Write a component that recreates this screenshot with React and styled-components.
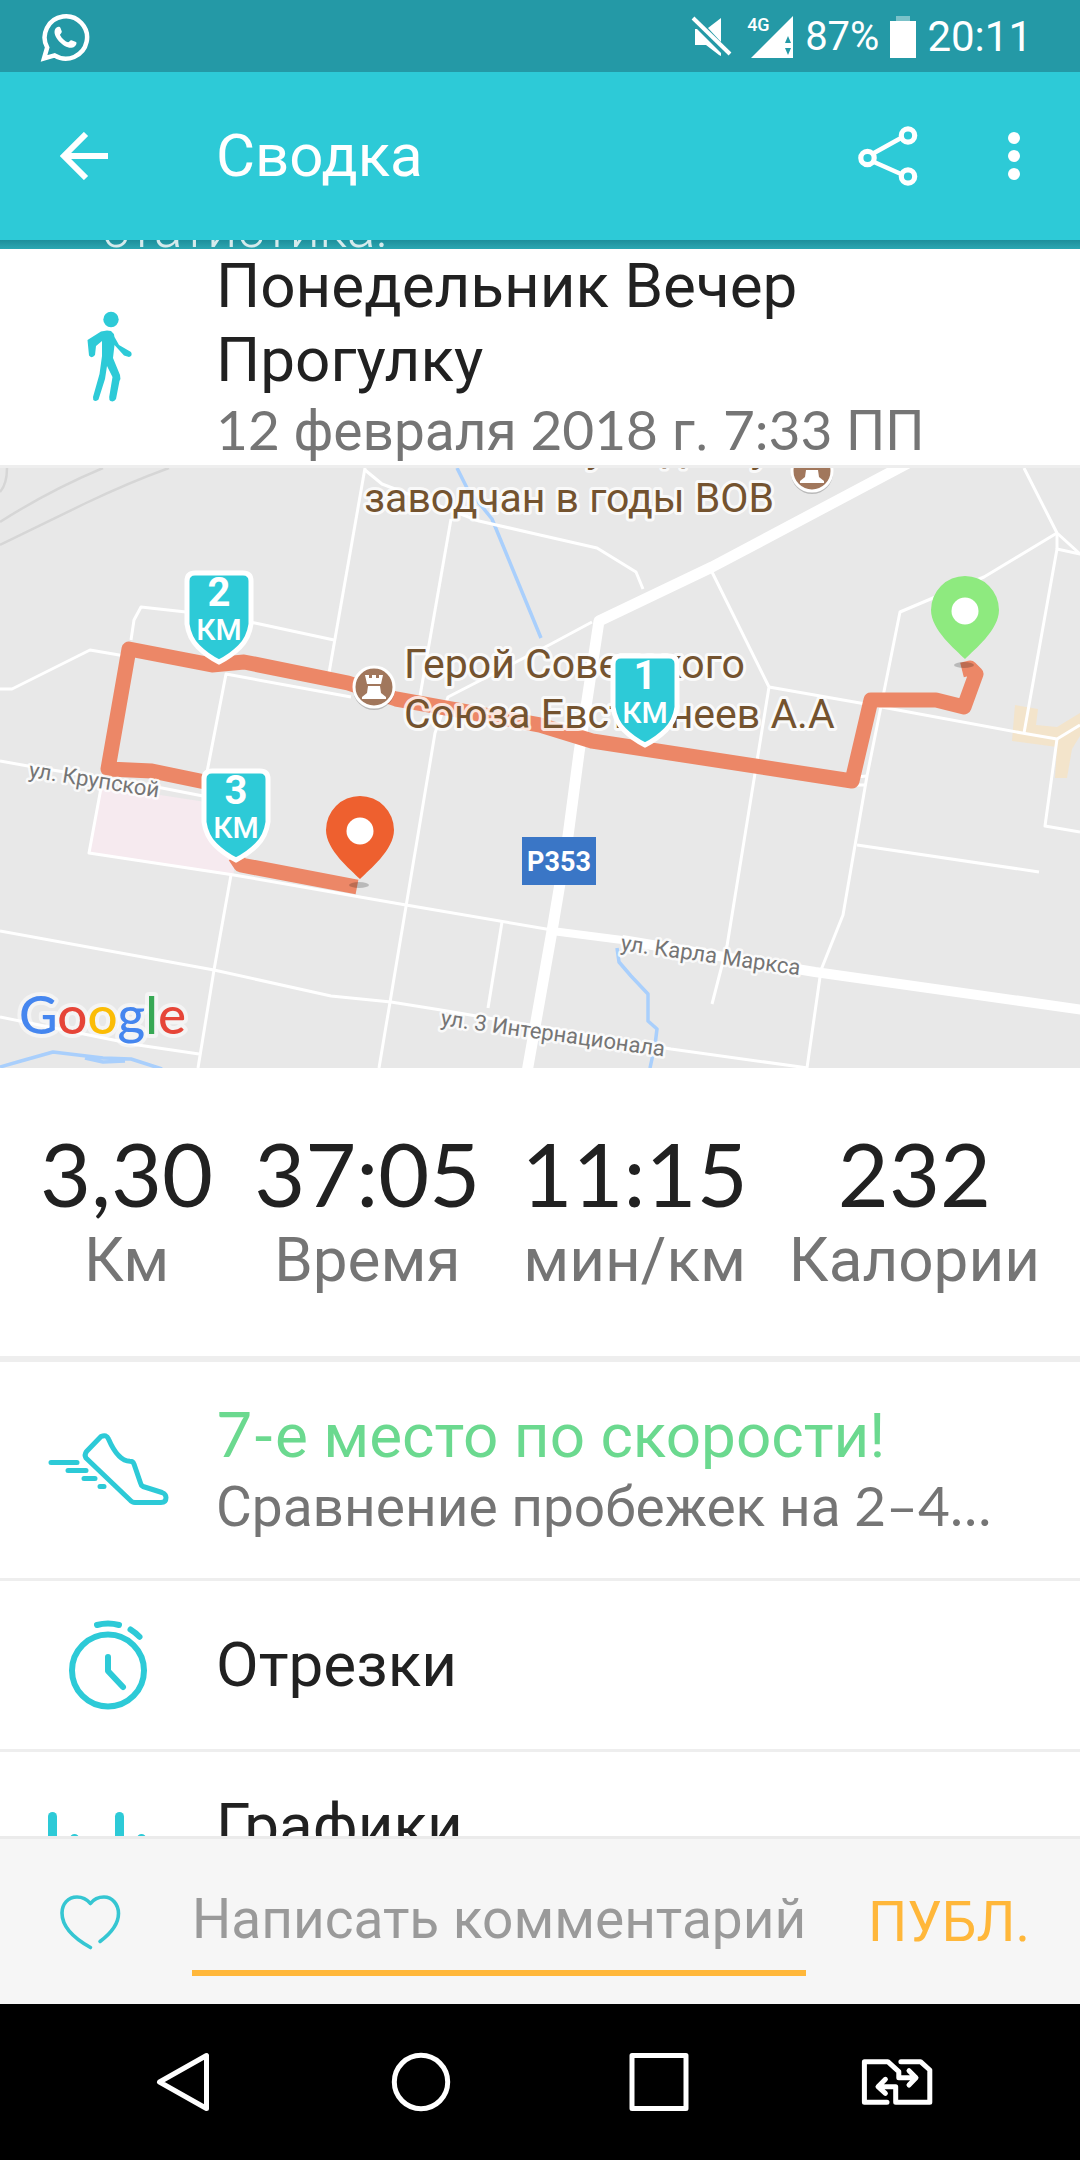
import React, { useState } from 'react'
import styled, { createGlobalStyle } from 'styled-components'

const GlobalStyle = createGlobalStyle`
* {
  box-sizing: border-box;
}
body {
  margin: 0;
  background: #ffffff;
  font-family: Roboto, 'Noto Sans', sans-serif;
}
button, input {
  border: 0;
  padding: 0;
  background: none;
  font: inherit;
}
h1, h2, p {
  margin: 0;
  font-weight: 400;
}
`

const Screen = styled.div`
display: flex;
flex-direction: column;
height: 100vh;
color: #212121;
`

const StatusBar = styled.div`
display: flex;
align-items: center;
justify-content: space-between;
flex: none;
height: 72px;
padding: 2px 48px 0 40px;
background: #2499a6;
color: #ffffff;
`

const StatusGroup = styled.div`
display: flex;
align-items: center;
gap: 11px;
font-size: ${props => props.size}px;
line-height: 48px;
`

const Network = styled.span`
display: flex;
position: relative;
margin-left: 6px;
`

const NetworkType = styled.span`
position: absolute;
top: 0;
left: -4px;
font-size: 18px;
line-height: 18px;
font-weight: 500;
`

const AppBar = styled.header`
display: flex;
align-items: center;
flex: none;
height: 168px;
background: #2dcad7;
color: #ffffff;
`

const BarButton = styled.button`
display: flex;
align-items: center;
justify-content: center;
flex: none;
width: ${props => props.width}px;
height: 100%;
color: inherit;
`

const BarTitle = styled.h1`
flex: 1;
padding-left: 48px;
font-size: 60px;
line-height: 72px;
`

const Feed = styled.main`
flex: 1;
min-height: 0;
overflow: hidden;
`

const Promo = styled.div`
display: flex;
align-items: flex-end;
height: 9px;
padding-left: 102px;
overflow: hidden;
background: linear-gradient(#1d8f9b, #2ba7b2);
color: #d5eaec;
font-size: 53px;
font-weight: 300;
line-height: 40px;
`

const Row = styled.section`
display: flex;
align-items: center;
height: ${props => props.height}px;
border-bottom: 3px solid #eeeeee;
`

const RowIcon = styled.div`
display: flex;
justify-content: center;
flex: none;
width: 216px;
color: #2dcad7;
`

const RowText = styled.div`
flex: 1;
min-width: 0;
min-height: ${props => props.lines * 71}px;
padding-right: 72px;
`

const RowTitle = styled.h2`
color: ${props => props.color || '#212121'};
font-size: 62px;
line-height: 74px;
`

const RowSub = styled.p`
color: #757575;
font-size: 55px;
line-height: 68px;
white-space: nowrap;
`

const Num = styled.span`
font-family: Lato, sans-serif;
font-variant-numeric: tabular-nums;
line-height: 1;
`

const MapBox = styled.div`
svg {
  display: block;
  width: 100%;
  height: auto;
}
`

const Stats = styled.section`
display: flex;
justify-content: space-between;
padding: 56px 40px 60px;
border-bottom: 6px solid #eeeeee;
`

const Stat = styled.div`
display: flex;
flex-direction: column;
align-items: center;
gap: 2px;
`

const StatValue = styled(Num)`
font-size: 88px;
line-height: 98px;
`

const StatLabel = styled.span`
color: #757575;
font-size: 62px;
line-height: 72px;
`

const CommentBar = styled.form`
display: flex;
flex: none;
height: 168px;
border-top: 3px solid #ebebeb;
background: #f6f6f6;
`

const LikeButton = styled.button`
display: flex;
align-items: center;
justify-content: center;
flex: none;
width: 180px;
color: #35c6d2;
`

const CommentInput = styled.input`
flex: 1;
min-width: 0;
margin: 28px 0 28px 12px;
border-bottom: 6px solid #ffb73a;
border-radius: 0;
outline: none;
color: #212121;
font-size: 55px;
&::placeholder {
  color: #9a9a9a;
  opacity: 1;
}
`

const PostButton = styled.button`
flex: none;
padding: 0 50px 0 62px;
color: #ffb73a;
font-size: 55px;
`

const NavBar = styled.nav`
display: flex;
flex: none;
height: 156px;
padding: 0 64px;
background: #000000;
color: #ffffff;
`

const NavButton = styled.button`
display: flex;
align-items: center;
justify-content: center;
flex: 1;
color: inherit;
`

function WhatsAppIcon () {
  return (
    <svg width='50' height='50' viewBox='0 0 50 50'>
      <path d='M4 46.5 L7.2 35.5 A21.2 21.2 0 1 1 14.6 43.4 Z' fill='none' stroke='currentColor' strokeWidth='4.5' />
      <path d='M15 17.5 C16.6 13.8 20 14.2 20.5 16 L21.8 19.5 C22 21 20 22 20 23 C22 27 25.5 29.5 28 30.3 C29.5 30 30 27.8 31.5 28.2 L36 30 C37.5 31 35.5 35.5 31.5 35.8 C24 36.5 12 24.5 15 17.5 Z' fill='currentColor' />
    </svg>
  )
}

function MuteIcon () {
  return (
    <svg width='44' height='46' viewBox='0 0 44 46' fill='currentColor'>
      <path d='M5 15 H7 L31 39 V42 L29 41 L16 31 H5 Z' />
      <path d='M18 14 L31 4 V28 Z' />
      <path d='M3 4 L40 40' stroke='currentColor' strokeWidth='4' />
    </svg>
  )
}

function SignalIcon () {
  return (
    <svg width='43' height='43' viewBox='0 0 43 43'>
      <path d='M42 0 V42 H0 Z' fill='currentColor' />
      <path d='M34 27 L37 20 L40 27 Z M34 32 L37 39 L40 32 Z' fill='#2499a6' />
    </svg>
  )
}

function BatteryIcon () {
  return (
    <svg width='26' height='42' viewBox='0 0 26 42' fill='currentColor'>
      <rect x='6' y='0' width='14' height='5' opacity='0.4' />
      <rect x='0' y='5' width='26' height='37' />
    </svg>
  )
}

function BackIcon () {
  return (
    <svg width='48' height='48' viewBox='0 0 48 48' fill='none' stroke='currentColor' strokeWidth='6'>
      <path d='M48 24 H5 M26 2 L4 24 L26 46' />
    </svg>
  )
}

function ShareIcon () {
  return (
    <svg width='60' height='62' viewBox='0 0 60 62' fill='none' stroke='currentColor' strokeWidth='5.2'>
      <path d='M16 28 L43 13 M16 37 L43 49' strokeWidth='4.6' />
      <circle cx='9.5' cy='33' r='6.7' />
      <circle cx='50' cy='10.5' r='6.7' />
      <circle cx='50' cy='51.5' r='6.7' />
    </svg>
  )
}

function MoreIcon () {
  return (
    <svg width='12' height='48' viewBox='0 0 12 48' fill='currentColor'>
      <circle cx='6' cy='6' r='6' />
      <circle cx='6' cy='24' r='6' />
      <circle cx='6' cy='42' r='6' />
    </svg>
  )
}

function WalkIcon () {
  return (
    <svg width='54' height='92' viewBox='-4 0 54 92' fill='currentColor'>
      <circle cx='26' cy='8.5' r='7.7' />
      <path d='M22 19.5 L26 20 Q29 22 29.5 26 L34 34 L46 41 Q48 45 44 46 L39 44.5 L29.5 34 L28 47 L35 64 Q36 68 34.5 70 L31 88 Q29 91.5 25.5 90 Q24 89 24.2 86 L27.5 66 L22 55 L20 68 L13.5 88.5 Q11 91 8.3 89 L8 86 L14.5 63 L17 45 V30 L11 35 L10 44 Q7 48 4 44.5 L2.5 29 L16 20.5 Z' />
    </svg>
  )
}

function ShoeIcon () {
  return (
    <svg width='124' height='76' viewBox='0 0 124 76' fill='none' stroke='currentColor' strokeWidth='5' strokeLinecap='round' strokeLinejoin='round'>
      <path d='M55 4.5 L40.5 19.5 Q38 23 40 26 L84 68 Q86 70.5 89 70.5 H115 Q120 70.5 120 65.5 Q120 62 116 60.5 L97 54.5 Q95 53.5 94.5 51 L88 32 Q87 29.3 84 29.3 Q72 29 62.5 7 Q60.5 2 55 4.5 Z' />
      <path d='M5 30.5 H31 M22 38.5 H40 M38 46.5 H49 M54 54.5 H58' />
    </svg>
  )
}

function StopwatchIcon () {
  return (
    <svg width='84' height='94' viewBox='0 0 84 94' fill='none' stroke='currentColor' strokeWidth='6' strokeLinecap='round' strokeLinejoin='round'>
      <circle cx='42' cy='52.5' r='36' />
      <path d='M42 39 V53 L57 69 M31 7 Q42 4 53 7 M64.5 11.5 Q70 15 73.5 18.7' />
    </svg>
  )
}

function ChartIcon () {
  return (
    <svg width='120' height='96' viewBox='0 0 120 96' fill='currentColor'>
      <rect x='0' y='0' width='9' height='96' rx='4.5' />
      <rect x='22' y='22' width='9' height='74' rx='4.5' />
      <rect x='67' y='0' width='9' height='96' rx='4.5' />
      <rect x='89' y='22' width='9' height='74' rx='4.5' />
    </svg>
  )
}

function HeartIcon ({ filled }) {
  return (
    <svg width='64' height='58' viewBox='0 0 64 58' fill={filled ? 'currentColor' : 'none'} stroke='currentColor' strokeWidth='3.6' strokeLinecap='round' strokeLinejoin='round'>
      <path d='M42 48.5 C52 41 60.5 31 60.5 20.5 C60.5 11 54 4 46 4 C40 4 35.5 6.5 32.5 10.5 C29 6.5 25 4 19 4 C10 4 4 11 4 20 C4 35 19 47 32.5 54.5' />
    </svg>
  )
}

const roads = [
  'M365 0 L329 205',
  'M365 2 L382 16 L479 53 L540 67 L597 80 L636 104 L643 121',
  'M451 51 L420 228',
  'M592 154 L551 176 L448 229 L435 265 L379 600',
  'M131 172 L134 152 L141 139 L186 144 L255 155 L334 172',
  'M0 221 L12 221 L90 182 L125 188',
  'M351 229 L226 206 L207 304',
  'M0 293 L28 298 L162 320 L203 328',
  'M101 320 L89 385 L234 407 L406 437 L552 462',
  'M231 407 L214 502 L198 600',
  'M0 463 L214 502 L331 528 L391 534 L441 542 L671 581 L808 600',
  'M0 549 L138 577 L199 586',
  'M502 454 L488 540',
  'M710 100 L769 219 L727 478 L712 536',
  'M769 219 L860 235 L1022 265 L1057 271 L1080 257',
  'M1057 271 L1045 358 L1080 364',
  'M1024 0 L1057 65 L1080 86 L1057 81 L1024 265',
  'M1057 65 L984 109 L933 130 L900 144 L867 308 L858 360 L843 447 L821 502 L807 600',
  'M1057 65 L1057 81',
  'M857 377 L1039 404',
  'M856 309 L867 308 M856 317 L865 317'
]

function Shield ({ x, y, value }) {
  return (
    <g transform={`translate(${x} ${y})`} textAnchor='middle' fill='#ffffff'>
      <path
        d='M-24 3 H24 Q32 3 32 11 V54 Q30 68 21 77 Q12 86 0 92 Q-12 86 -21 77 Q-30 68 -32 54 V11 Q-32 3 -24 3 Z'
        fill='#2dcad7' stroke='#ffffff' strokeWidth='5'
      />
      <text x='0' y='36' fontSize='40' fontWeight='700'>{value}</text>
      <text x='0' y='70' fontSize='30' fontWeight='500'>КМ</text>
    </g>
  )
}

function Pin ({ x, y, color }) {
  return (
    <g transform={`translate(${x} ${y})`}>
      <ellipse cx='-1' cy='6' rx='10' ry='3' fill='#000000' opacity='0.2' />
      <path d='M0 0 C-9 -9 -34 -29 -34 -49 A34 34 0 0 1 34 -49 C34 -29 9 -9 0 0 Z' fill={color} />
      <circle cx='0' cy='-48' r='13.5' fill='#ffffff' />
    </g>
  )
}

function Poi ({ x, y }) {
  return (
    <g transform={`translate(${x} ${y})`}>
      <circle cx='0' cy='2' r='21' fill='#000000' opacity='0.2' />
      <circle cx='0' cy='0' r='20' fill='#a1775c' stroke='#ffffff' strokeWidth='3' />
      <path d='M-9 -12 H-5 V-9 H-2 V-12 H2 V-9 H5 V-12 H9 L7 -3 H-7 Z M-6 -1 H6 L7 6 L12 10 V12 H-12 V10 L-7 6 Z' fill='#ffffff' />
    </g>
  )
}

function RouteMap () {
  return (
    <MapBox>
      <svg viewBox='0 0 1080 600' fontFamily='Roboto, sans-serif' role='img' aria-label='Карта'>
        <rect width='1080' height='600' fill='#e8e8e8' />
        <path d='M101 318 L245 340 L233 408 L90 384 Z' fill='#f6eaef' />
        <path d='M1015 237 L1038 241 L1036 257 L1057 259 L1080 245 V268 L1072 281 L1067 310 H1055 L1057 279 L1012 273 Z' fill='#f3e4cb' />
        <g fill='none' stroke='#d6d6d6' strokeWidth='2.5'>
          <path d='M0 54 Q50 22 103 0 M0 77 L86 35 Q130 14 169 0 M7 0 Q7 16 0 24' />
        </g>
        <g fill='none' stroke='#a9cffc' strokeWidth='3.5' strokeLinejoin='round'>
          <path d='M457 0 L467 20 L492 51 L541 170' />
          <path d='M617 480 L619 494 L631 508 L648 526 V553 L657 561 L655 577 L650 600' />
          <path d='M0 599 L21 593 L53 584 L103 590 L131 591 L162 601 M85 590 L103 594 L125 593' />
        </g>
        <g fill='none' stroke='#ffffff' strokeWidth='3' strokeLinejoin='round'>
          {roads.map(d => <path key={d} d={d} />)}
          <path d='M527 604 L552 463 L568 368 L579 285 L599 153 L712 99 L910 -6' strokeWidth='11' />
          <path d='M552 463 L622 472' strokeWidth='8' />
          <path d='M622 472 L815 504 L1084 542' strokeWidth='10' />
        </g>

        <path
          d='M962 202 L970 200 L976 206 L964 239 L936 232 H871 L852 313 L592 273 L540 257 L396 231 L348 215 L244 194 L212 197 L129 181 L108 301 L152 303 L205 314 M235 388 L241 397 L357 419'
          fill='none' stroke='#ec8767' strokeWidth='15' strokeLinejoin='round'
        />

        <g fill='#74532f' fontSize='41' stroke='#ffffff' strokeOpacity='0.8' strokeWidth='6' strokeLinejoin='round' paintOrder='stroke'>
          <text x='770' y='-6' textAnchor='end'>у подвигу</text>
          <text x='774' y='44' textAnchor='end'>заводчан в годы ВОВ</text>
          <text x='404' y='210'>Герой Советского</text>
          <text x='404' y='260'>Союза Евстигнеев А.А</text>
        </g>
        <g fill='#757575' fontSize='22' stroke='#ffffff' strokeOpacity='0.8' strokeWidth='5' strokeLinejoin='round' paintOrder='stroke'>
          <text transform='translate(28 309) rotate(9)'>ул. Крупской</text>
          <text transform='translate(620 482) rotate(8)'>ул. Карла Маркса</text>
          <text transform='translate(440 557) rotate(8)'>ул. 3 Интернационала</text>
        </g>

        <rect x='522' y='369' width='74' height='48' fill='#3a76c6' />
        <text x='559' y='403' textAnchor='middle' fill='#ffffff' fontSize='27' fontWeight='700'>Р353</text>

        <Poi x={374} y={219} />
        <Poi x={812} y={3} />
        <Shield x={219} y={102} value='2' />
        <Shield x={236} y={300} value='3' />
        <Shield x={645} y={185} value='1' />
        <Pin x={965} y={191} color='#8eea7f' />
        <Pin x={360} y={411} color='#ee602f' />

        <text x='19' y='566' fontFamily='Lato, sans-serif' fontSize='53' fontWeight='500' stroke='#ffffff' strokeOpacity='0.5' strokeWidth='8' strokeLinejoin='round' paintOrder='stroke'>
          <tspan fill='#4586ef'>G</tspan>
          <tspan fill='#e64538'>o</tspan>
          <tspan fill='#fbbc05'>o</tspan>
          <tspan fill='#4586ef'>g</tspan>
          <tspan fill='#37a854'>l</tspan>
          <tspan fill='#e64538'>e</tspan>
        </text>
      </svg>
    </MapBox>
  )
}

const stats = [
  { value: '3,30', label: 'Км' },
  { value: '37:05', label: 'Время' },
  { value: '11:15', label: 'мин/км' },
  { value: '232', label: 'Калории' }
]

function App () {
  const [liked, setLiked] = useState(false)
  const [comment, setComment] = useState('')

  return (
    <Screen>
      <GlobalStyle />
      <StatusBar>
        <WhatsAppIcon />
        <StatusGroup size={40}>
          <MuteIcon />
          <Network><NetworkType>4G</NetworkType><SignalIcon /></Network>
          <span>87%</span>
          <BatteryIcon />
          <StatusGroup as='span' size={42}>20:11</StatusGroup>
        </StatusGroup>
      </StatusBar>

      <AppBar>
        <BarButton width={168} aria-label='Назад'><BackIcon /></BarButton>
        <BarTitle>Сводка</BarTitle>
        <BarButton width={120} aria-label='Поделиться'><ShareIcon /></BarButton>
        <BarButton width={132} aria-label='Ещё'><MoreIcon /></BarButton>
      </AppBar>

      <Feed>
        <Promo>статистика.</Promo>
        <Row height={219}>
          <RowIcon><WalkIcon /></RowIcon>
          <RowText lines={3}>
            <RowTitle>Понедельник Вечер Прогулку</RowTitle>
            <RowSub><Num>12</Num> февраля <Num>2018</Num> г. <Num>7:33</Num> ПП</RowSub>
          </RowText>
        </Row>

        <RouteMap />

        <Stats>
          {stats.map(stat => (
            <Stat key={stat.label}>
              <StatValue>{stat.value}</StatValue>
              <StatLabel>{stat.label}</StatLabel>
            </Stat>
          ))}
        </Stats>

        <Row height={219}>
          <RowIcon><ShoeIcon /></RowIcon>
          <RowText lines={2}>
            <RowTitle color='#6bd98f'><Num>7-</Num>е место по скорости!</RowTitle>
            <RowSub>Сравнение пробежек на <Num>2–4…</Num></RowSub>
          </RowText>
        </Row>
        <Row height={171}>
          <RowIcon><StopwatchIcon /></RowIcon>
          <RowText lines={1}>
            <RowTitle>Отрезки</RowTitle>
          </RowText>
        </Row>
        <Row height={219}>
          <RowIcon><ChartIcon /></RowIcon>
          <RowText lines={2}>
            <RowTitle>Графики</RowTitle>
          </RowText>
        </Row>
      </Feed>

      <CommentBar onSubmit={e => e.preventDefault()}>
        <LikeButton type='button' aria-label='Нравится' onClick={() => setLiked(!liked)}>
          <HeartIcon filled={liked} />
        </LikeButton>
        <CommentInput
          aria-label='Написать комментарий'
          placeholder='Написать комментарий'
          value={comment}
          onChange={e => setComment(e.target.value)}
        />
        <PostButton type='submit'>ПУБЛ.</PostButton>
      </CommentBar>

      <NavBar>
        <NavButton aria-label='Назад'>
          <svg width='54' height='60' viewBox='0 0 54 60' fill='none' stroke='currentColor' strokeWidth='5' strokeLinejoin='round'>
            <path d='M50.5 3.5 V56.5 L3.5 30 Z' />
          </svg>
        </NavButton>
        <NavButton aria-label='Домой'>
          <svg width='60' height='60' viewBox='0 0 60 60' fill='none' stroke='currentColor' strokeWidth='5'>
            <circle cx='30' cy='30' r='26.7' />
          </svg>
        </NavButton>
        <NavButton aria-label='Недавние'>
          <svg width='60' height='60' viewBox='0 0 60 60' fill='none' stroke='currentColor' strokeWidth='5' strokeLinejoin='round'>
            <rect x='3' y='3.5' width='54' height='53' />
          </svg>
        </NavButton>
        <NavButton aria-label='Сменить SIM'>
          <svg width='76' height='50' viewBox='0 0 76 50' fill='none' stroke='currentColor' strokeWidth='5' strokeLinecap='round' strokeLinejoin='round'>
            <path d='M28 45.3 H5.4 V4.7 H28.8 L39.8 14.7 V20.7 H56 M50 13.7 L57 20.7 L50 28' />
            <path d='M41.9 4.7 H61.5 L70.8 13 V45.3 H36.7 V29.7 H20 M26.4 22.3 L19 29.7 L26.4 36.3' />
          </svg>
        </NavButton>
      </NavBar>
    </Screen>
  )
}

export default App
